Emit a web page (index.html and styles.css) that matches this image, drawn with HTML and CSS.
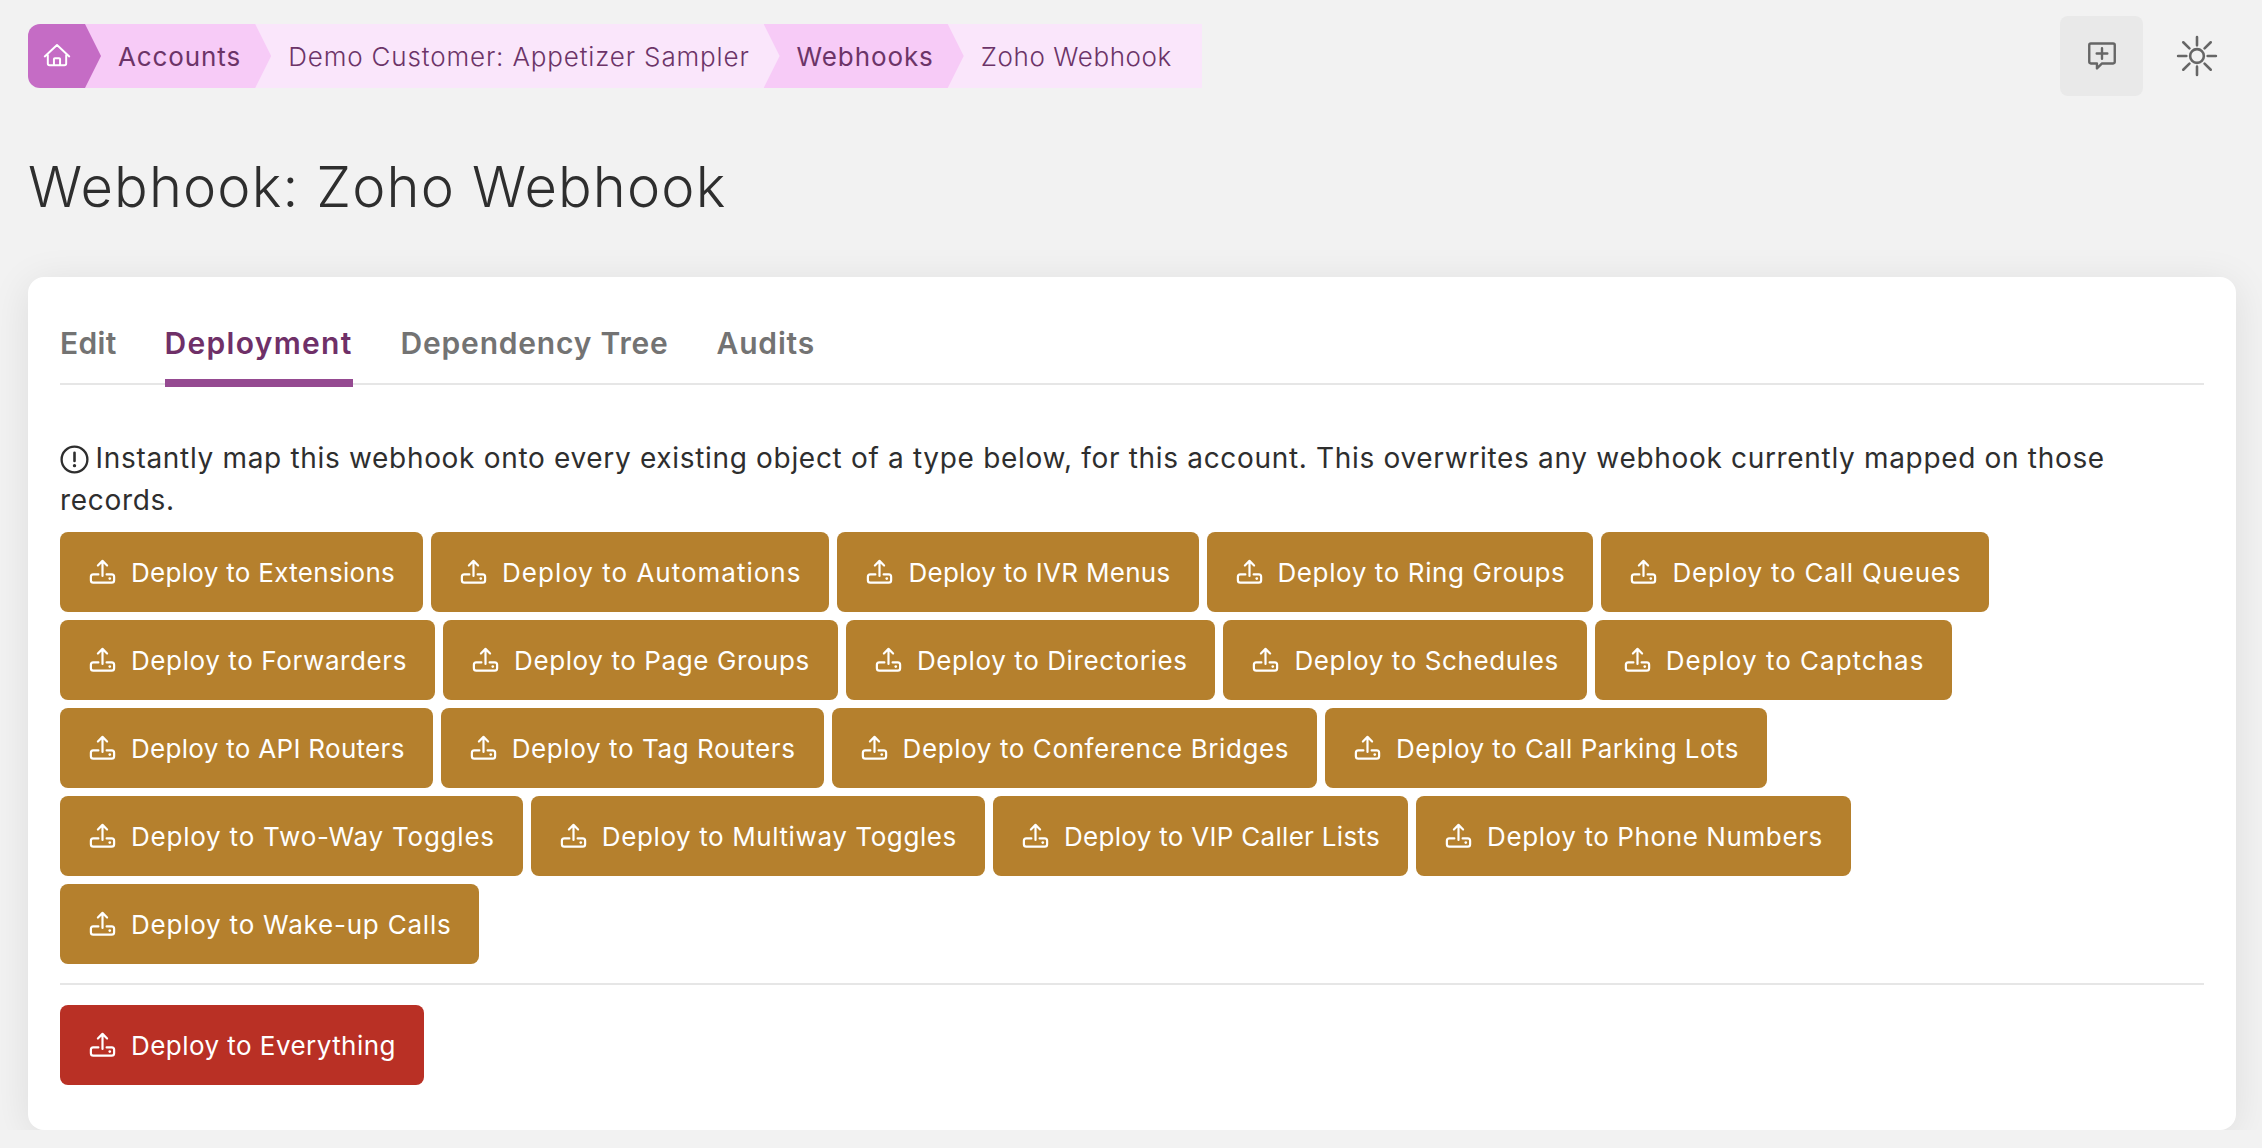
FILE: index.html
```html
<!DOCTYPE html>
<html lang="en">
<head>
  <meta charset="UTF-8">
  <meta name="viewport" content="width=device-width, initial-scale=1.0">
  <title>Webhook: Zoho Webhook</title>
  <link rel="stylesheet" href="styles.css">
</head>
<body>

  <svg class="icon-defs" width="0" height="0" aria-hidden="true">
    <symbol id="icon-upload" viewBox="0 0 256 256">
      <path d="M94 144H52a20 20 0 0 0-20 20v28a20 20 0 0 0 20 20h152a20 20 0 0 0 20-20v-28a20 20 0 0 0-20-20h-42" fill="none" stroke="currentColor" stroke-width="18" stroke-linecap="round" stroke-linejoin="round"/>
      <path d="M128 156V32M90 70l38-38 38 38" fill="none" stroke="currentColor" stroke-width="18" stroke-linecap="round" stroke-linejoin="round"/>
      <circle cx="188" cy="178" r="11" fill="currentColor"/>
    </symbol>
  </svg>

  <!-- Top bar -->
  <div class="topbar">
    <nav class="crumbs">
      <a class="crumb crumb-home">
        <svg viewBox="0 0 256 256" width="28" height="28"><path d="M44 120v76a16 16 0 0 0 16 16h136a16 16 0 0 0 16-16v-76M16 132 128 28l112 104M100 212v-56a8 8 0 0 1 8-8h40a8 8 0 0 1 8 8v56" fill="none" stroke="currentColor" stroke-width="18" stroke-linecap="round" stroke-linejoin="round"/></svg>
      </a>
      <a class="crumb crumb-link">Accounts</a>
      <a class="crumb crumb-plain crumb-long">Demo Customer: Appetizer Sampler</a>
      <a class="crumb crumb-link">Webhooks</a>
      <a class="crumb crumb-plain crumb-last">Zoho Webhook</a>
    </nav>
    <div class="top-actions">
      <button type="button" class="top-btn top-btn-active">
        <svg viewBox="0 14 256 256" width="34" height="34"><path d="M44 48h168a12 12 0 0 1 12 12v126a12 12 0 0 1-12 12h-84l-38 38v-38H44a12 12 0 0 1-12-12V60a12 12 0 0 1 12-12ZM88 123h80M128 83v80" fill="none" stroke="currentColor" stroke-width="18" stroke-linecap="round" stroke-linejoin="round"/></svg>
      </button>
      <button type="button" class="top-btn">
        <svg viewBox="0 0 256 256" width="44" height="44"><circle cx="128" cy="128" r="40" fill="none" stroke="currentColor" stroke-width="15"/><path d="M128 18v48M128 190v48M48 48l36 36M172 172l36 36M18 128h48M190 128h48M48 208l36-36M172 84l36-36" fill="none" stroke="currentColor" stroke-width="15" stroke-linecap="round"/></svg>
      </button>
    </div>
  </div>

  <h1>Webhook: Zoho Webhook</h1>

  <div class="card">
    <div class="tabs">
      <a class="tab tab-short">Edit</a>
      <a class="tab tab-active">Deployment</a>
      <a class="tab">Dependency Tree</a>
      <a class="tab">Audits</a>
    </div>

    <p class="notice">
      <svg class="notice-icon" viewBox="0 0 256 256" width="33" height="33"><circle cx="128" cy="128" r="100" fill="none" stroke="currentColor" stroke-width="18"/><path d="M128 76v64" fill="none" stroke="currentColor" stroke-width="20" stroke-linecap="round"/><circle cx="128" cy="176" r="13" fill="currentColor"/></svg>
      Instantly map this webhook onto every existing object of a type below, for this account. This overwrites any webhook currently mapped on those records.
    </p>

    <div class="deploy-list">
      <button type="button" class="deploy-btn fit-tight"><svg class="btn-icon"><use href="#icon-upload"/></svg>Deploy to Extensions</button>
      <button type="button" class="deploy-btn fit-xwide"><svg class="btn-icon"><use href="#icon-upload"/></svg>Deploy to Automations</button>
      <button type="button" class="deploy-btn fit-tight"><svg class="btn-icon"><use href="#icon-upload"/></svg>Deploy to IVR Menus</button>
      <button type="button" class="deploy-btn fit-loose"><svg class="btn-icon"><use href="#icon-upload"/></svg>Deploy to Ring Groups</button>
      <button type="button" class="deploy-btn fit-wide"><svg class="btn-icon"><use href="#icon-upload"/></svg>Deploy to Call Queues</button>
      <button type="button" class="deploy-btn fit-loose"><svg class="btn-icon"><use href="#icon-upload"/></svg>Deploy to Forwarders</button>
      <button type="button" class="deploy-btn fit-loose"><svg class="btn-icon"><use href="#icon-upload"/></svg>Deploy to Page Groups</button>
      <button type="button" class="deploy-btn fit-loose"><svg class="btn-icon"><use href="#icon-upload"/></svg>Deploy to Directories</button>
      <button type="button" class="deploy-btn fit-loose"><svg class="btn-icon"><use href="#icon-upload"/></svg>Deploy to Schedules</button>
      <button type="button" class="deploy-btn fit-xwide"><svg class="btn-icon"><use href="#icon-upload"/></svg>Deploy to Captchas</button>
      <button type="button" class="deploy-btn fit-tight"><svg class="btn-icon"><use href="#icon-upload"/></svg>Deploy to API Routers</button>
      <button type="button" class="deploy-btn fit-loose"><svg class="btn-icon"><use href="#icon-upload"/></svg>Deploy to Tag Routers</button>
      <button type="button" class="deploy-btn fit-loose"><svg class="btn-icon"><use href="#icon-upload"/></svg>Deploy to Conference Bridges</button>
      <button type="button" class="deploy-btn"><svg class="btn-icon"><use href="#icon-upload"/></svg>Deploy to Call Parking Lots</button>
      <button type="button" class="deploy-btn fit-wide"><svg class="btn-icon"><use href="#icon-upload"/></svg>Deploy to Two-Way Toggles</button>
      <button type="button" class="deploy-btn fit-loose"><svg class="btn-icon"><use href="#icon-upload"/></svg>Deploy to Multiway Toggles</button>
      <button type="button" class="deploy-btn fit-tight"><svg class="btn-icon"><use href="#icon-upload"/></svg>Deploy to VIP Caller Lists</button>
      <button type="button" class="deploy-btn fit-loose"><svg class="btn-icon"><use href="#icon-upload"/></svg>Deploy to Phone Numbers</button>
      <button type="button" class="deploy-btn fit-wide"><svg class="btn-icon"><use href="#icon-upload"/></svg>Deploy to Wake-up Calls</button>
    </div>

    <hr class="divider">

    <button type="button" class="deploy-btn deploy-btn-danger"><svg class="btn-icon"><use href="#icon-upload"/></svg>Deploy to Everything</button>
  </div>

</body>
</html>
```

FILE: styles.css
```css
body {
  font-family: Inter, "Noto Sans", sans-serif;
  margin: 0;
  padding: 16px 26px 0 28px;
  background-color: #f2f2f2;
  color: #2e2e2e;
}

.icon-defs {
  position: absolute;
}

/* Top bar */
.topbar {
  display: flex;
  justify-content: space-between;
  align-items: flex-start;
  margin-right: -2px;
}

.crumbs {
  display: flex;
  margin-top: 8px;
  height: 64px;
  font-size: 26px;
  color: #6c3468;
}

.crumb {
  display: flex;
  align-items: center;
  margin-left: -16px;
  padding: 0 30px 0 33px;
  clip-path: polygon(0 0, calc(100% - 16px) 0, 100% 50%, calc(100% - 16px) 100%, 0 100%);
  white-space: nowrap;
  letter-spacing: 0.6px;
}

.crumb-home {
  margin-left: 0;
  padding: 0 30px 0 15px;
  background-color: #c56cc5;
  color: #fff;
  border-radius: 12px 0 0 12px;
  z-index: 5;
}

.crumb-link {
  background-color: #f7cbf7;
  letter-spacing: 0.9px;
}

.crumb-plain {
  background-color: #fae6fb;
  font-weight: 300;
}

.crumb-long {
  letter-spacing: 0.85px;
}

.crumb-last {
  clip-path: none;
}

.crumb:nth-child(2) { z-index: 4; }
.crumb:nth-child(3) { z-index: 3; }
.crumb:nth-child(4) { z-index: 2; }

.top-actions {
  display: flex;
  align-items: center;
  gap: 12px;
}

.top-btn {
  display: flex;
  align-items: center;
  justify-content: center;
  width: 83px;
  height: 80px;
  padding: 0;
  border: none;
  border-radius: 8px;
  background: none;
  color: #666;
}

.top-btn-active {
  background-color: #e9e9e9;
}

h1 {
  margin: 49px 0 0;
  font-size: 56px;
  line-height: 84px;
  font-weight: 300;
  letter-spacing: 1.15px;
  color: #2e2e2e;
}

/* Card */
.card {
  margin-top: 48px;
  padding: 32px 32px 45px;
  background-color: #fff;
  border-radius: 16px;
  box-shadow: 0 6px 40px rgba(0, 0, 0, 0.09);
}

.tabs {
  display: flex;
  gap: 48px;
  height: 76px;
  border-bottom: 2px solid #e6e6e6;
  box-sizing: border-box;
}

.tab {
  height: 76px;
  box-sizing: border-box;
  padding-top: 12px;
  font-size: 30px;
  line-height: 44px;
  font-weight: 600;
  letter-spacing: 0.8px;
  color: #737373;
}

.tab-short {
  letter-spacing: 0.3px;
}

.tab-active {
  color: #6f3068;
  border-bottom: 8px solid #954a91;
  height: 78px;
  letter-spacing: 1.3px;
}

.notice {
  margin: 52px 0 0;
  font-size: 28px;
  line-height: 42px;
  letter-spacing: 0.68px;
}

.notice-icon {
  vertical-align: -2px;
  margin: -6px -4px -6px -2px;
}

.deploy-list {
  display: flex;
  flex-wrap: wrap;
  gap: 8px;
  margin-top: 11px;
}

.deploy-btn {
  display: inline-flex;
  align-items: center;
  gap: 13px;
  height: 80px;
  padding: 0 28px 0 27px;
  border: none;
  border-radius: 8px;
  background-color: #b5802d;
  color: #fff;
  font-family: inherit;
  font-size: 26px;
  font-weight: 400;
  letter-spacing: 0.45px;
  white-space: nowrap;
}

.fit-tight { letter-spacing: 0.3px; }
.fit-loose { letter-spacing: 0.6px; }
.fit-wide { letter-spacing: 0.78px; }
.fit-xwide { letter-spacing: 1px; }

.deploy-btn-danger {
  background-color: #b93025;
}

.btn-icon {
  width: 31px;
  height: 31px;
}

.divider {
  margin: 19px 0 20px;
  border: none;
  border-top: 2px solid #e6e6e6;
}
```
